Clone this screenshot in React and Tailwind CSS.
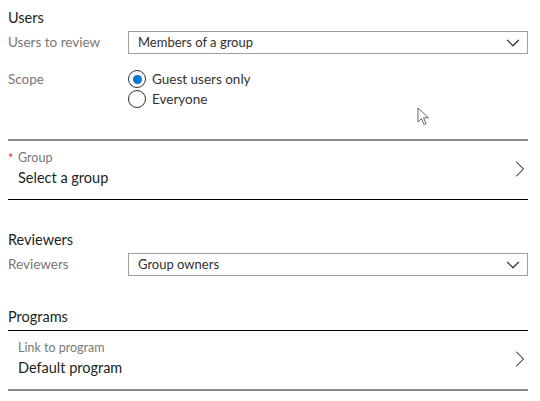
import { ChevronDown, ChevronRight } from "lucide-react";

const font = { fontFamily: 'Lato, "Noto Sans", sans-serif' };

function Dropdown({ value }) {
  return (
    <div className="flex-1 h-[23px] border border-[#a19f9d] flex items-center justify-between pl-[9px] pr-[3px]">
      <span className="text-[13px] text-[#323130] leading-none">{value}</span>
      <ChevronDown size={22} strokeWidth={1.3} className="text-[#323130]" />
    </div>
  );
}

function Radio({ checked, label }) {
  return (
    <div className="flex items-center h-[20px]">
      <span className="w-[18px] h-[18px] rounded-full border border-[#323130] flex items-center justify-center">
        {checked && <span className="w-[9px] h-[9px] rounded-full bg-[#0078d4]" />}
      </span>
      <span className="ml-[6px] text-[13.5px] text-[#323130]">{label}</span>
    </div>
  );
}

function LinkRow({ label, value, required, bottom }) {
  return (
    <div className={`flex items-center justify-between pt-[9px] pb-[11px] pl-[10px] pr-0 ${bottom}`}>
      <div className="flex flex-col gap-[2px]">
        <div className="h-[16px] flex items-center text-[12.5px] text-[#797775] relative">
          {required && <span className="absolute -left-[10px] top-0 text-[#d13438]">*</span>}
          {label}
        </div>
        <div className="h-[20px] flex items-center text-[14.5px] text-[#201f1e]">{value}</div>
      </div>
      <ChevronRight size={28} strokeWidth={0.9} className="text-[#323130] -mr-[6px]" />
    </div>
  );
}

export default function App() {
  return (
    <div className="w-[540px] h-[401px] bg-white relative overflow-hidden pl-[8px] pr-[12px] pt-[8px]" style={font}>
      <div className="h-[20px] flex items-center text-[14.5px] text-[#201f1e]">Users</div>
      <div className="flex items-center mt-[3px]">
        <div className="w-[120px] text-[13.5px] text-[#797775]">Users to review</div>
        <Dropdown value="Members of a group" />
      </div>
      <div className="flex mt-[15px]">
        <div className="w-[120px] h-[20px] flex items-center text-[13.5px] text-[#797775]">Scope</div>
        <div className="flex flex-col">
          <Radio checked label="Guest users only" />
          <Radio label="Everyone" />
        </div>
      </div>

      <div className="mt-[30px] border-t-2 border-[#8a8886]" />
      <LinkRow required label="Group" value="Select a group" bottom="border-b border-black" />

      <div className="mt-[30px] h-[20px] flex items-center text-[14.5px] text-[#201f1e]">Reviewers</div>
      <div className="flex items-center mt-[3px]">
        <div className="w-[120px] text-[13.5px] text-[#797775]">Reviewers</div>
        <Dropdown value="Group owners" />
      </div>

      <div className="mt-[31px] h-[20px] flex items-center text-[14.5px] text-[#201f1e]">Programs</div>
      <div className="mt-[3px] border-t border-black" />
      <LinkRow label="Link to program" value="Default program" bottom="border-b-2 border-[#8a8886]" />

      <svg className="absolute left-[417px] top-[107px]" width="14" height="20" viewBox="0 0 14 20">
        <path d="M1 1 L1 15 L4.5 11.5 L7 17.5 L9 16.6 L6.6 10.8 L11.5 10.8 Z" fill="white" stroke="#555" strokeWidth="0.9" strokeLinejoin="round" />
      </svg>
    </div>
  );
}
